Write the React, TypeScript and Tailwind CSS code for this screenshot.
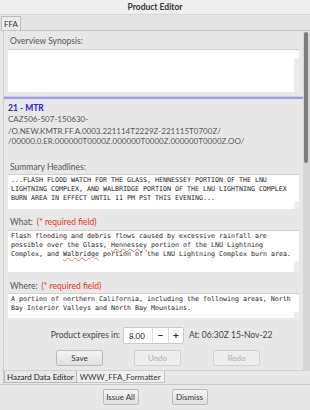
import React from 'react';

const sans = { fontFamily: 'Lato, "DejaVu Sans", sans-serif' };
const mono = { fontFamily: '"DejaVu Sans Mono", "Liberation Mono", monospace' };

function Label({ text, required }: { text: string; required?: boolean }) {
  return (
    <div className="h-[10px] flex items-center pl-[6px] text-[8.5px] leading-[10px] text-[#555]">
      <span>{text}</span>
      {required && <span className="ml-[4px] text-[#e8302a]">(* required field)</span>}
    </div>
  );
}

function TextBox({
  h,
  track,
  children,
}: {
  h: string;
  track: string;
  children?: React.ReactNode;
}) {
  return (
    <div className={`mx-[4px] ${h} bg-white border-t border-[#d0d0d0] flex`}>
      <div
        className="flex-1 pl-[3px] pt-[1px] text-[6.65px] leading-[8.8px] text-[#222] whitespace-pre overflow-hidden"
        style={mono}
      >
        {children}
      </div>
      <div className="w-[5px] flex flex-col justify-end">
        <div className={`${track} bg-[#ececec]`} />
      </div>
    </div>
  );
}

function Btn({ label, disabled }: { label: string; disabled?: boolean }) {
  return (
    <div
      className={`w-[47px] h-[16px] flex items-center justify-center rounded-[2px] border text-[8px] ${
        disabled
          ? 'border-[#d2d2d2] bg-[#ededed] text-[#b0b0b0]'
          : 'border-[#b9b9b9] bg-gradient-to-b from-[#f4f4f4] to-[#e0e0e0] text-[#333]'
      }`}
    >
      {label}
    </div>
  );
}

function Spell({ children }: { children: React.ReactNode }) {
  return (
    <span className="underline decoration-wavy decoration-[#f07070] decoration-[0.5px] underline-offset-[1px]">
      {children}
    </span>
  );
}

export default function App() {
  return (
    <div className="w-[310px] h-[410px] bg-[#e8e8e8] flex flex-col overflow-hidden" style={sans}>
      {/* title bar */}
      <div className="h-[15px] bg-[#efefef] border-b border-[#d6d6d6] flex items-center justify-center text-[8.5px] font-bold text-[#333]">
        Product Editor
      </div>

      {/* top tab strip */}
      <div className="h-[16px] bg-[#e4e4e4] border-b border-[#c4c4c4] flex items-end pl-[1px]">
        <div className="h-[14px] px-[2px] bg-[#eeeeee] border border-b-0 border-[#bcbcbc] flex items-center text-[8px] text-[#333]">
          FFA
        </div>
      </div>

      {/* main panel */}
      <div className="h-[354px] flex pl-[3px] border-b border-[#c8c8c8]">
        <div className="flex-1 flex flex-col border-l border-[#cccccc]">
          <div className="h-[340px] flex flex-col overflow-hidden">
            {/* overview */}
            <div className="h-[66px] pt-[5px] border-b border-[#d2d2d2] flex flex-col">
              <Label text="Overview Synopsis:" />
              <div className="h-[3px]" />
              <TextBox h="h-[43px]" track="h-[34px]" />
            </div>
            <div className="h-[2px] bg-[#9c9cf0]" />

            <div className="mt-[4px] h-[10px] pl-[4px] text-[8.5px] leading-[10px] font-bold text-[#2424c8]">21 - MTR</div>
            <div className="mt-[1px] h-[10px] pl-[4px] text-[8px] leading-[10px] text-[#555]">CAZ506-507-150630-</div>
            <div className="mt-[2px] h-[10px] pl-[4px] text-[8px] leading-[10px] text-[#555]">
              /O.NEW.KMTR.FF.A.0003.221114T2229Z-221115T0700Z/
            </div>
            <div className="h-[10px] pl-[4px] text-[8px] leading-[10px] text-[#555]">
              /00000.0.ER.000000T0000Z.000000T0000Z.000000T0000Z.OO/
            </div>

            <div className="mt-[16px]" />
            <Label text="Summary Headlines:" />
            <div className="h-[2px]" />
            <TextBox h="h-[35px]" track="h-[8px]">
              {'...FLASH FLOOD WATCH FOR THE GLASS, HENNESSEY PORTION OF THE LNU\nLIGHTNING COMPLEX, AND WALBRIDGE PORTION OF THE LNU LIGHTNING COMPLEX\nBURN AREA IN EFFECT UNTIL 11 PM PST THIS EVENING...'}
            </TextBox>

            <div className="mt-[8px]" />
            <Label text="What:" required />
            <div className="h-[3px]" />
            <TextBox h="h-[42px]" track="h-[11px]">
              {'Flash flooding and debris flows caused by excessive rainfall are\npossible over the Glass, '}
              <Spell>Hennessey</Spell>
              {' portion of the LNU Lightning\nComplex, and '}
              <Spell>Walbridge</Spell>
              {' portion of the LNU Lightning Complex burn area.'}
            </TextBox>

            <div className="mt-[9px]" />
            <Label text="Where:" required />
            <div className="h-[2px]" />
            <TextBox h="h-[25px]" track="h-[6px]">
              {'A portion of northern California, including the following areas, North\nBay Interior Valleys and North Bay Mountains.'}
            </TextBox>

            {/* expires row */}
            <div className="mt-[9px] h-[17px] flex items-center">
              <div className="w-[116px] text-right text-[8.5px] text-[#444]">Product expires in:</div>
              <div className="ml-[3px] h-[17px] w-[61px] bg-white border border-[#c8c8c8] rounded-[2px] flex items-center text-[8px] text-[#222]">
                <div className="w-[28px] pl-[5px]">8.00</div>
                <div className="w-[16px] h-full border-l border-[#dcdcdc] flex items-center justify-center text-[10px] font-bold">−</div>
                <div className="flex-1 h-full border-l border-[#dcdcdc] flex items-center justify-center text-[10px] font-bold">+</div>
              </div>
              <div className="ml-[5px] text-[8.5px] text-[#444]">At: 06:30Z 15-Nov-22</div>
            </div>

            {/* save undo redo */}
            <div className="mt-[6px] flex">
              <div className="ml-[52px]"><Btn label="Save" /></div>
              <div className="ml-[31px]"><Btn label="Undo" disabled /></div>
              <div className="ml-[32px]"><Btn label="Redo" disabled /></div>
            </div>
          </div>

          {/* bottom tabs */}
          <div className="h-[14px] flex items-start border-t border-[#d0d0d0]">
            <div className="h-[12px] px-[2px] border border-t-0 border-[#b8b8b8] bg-[#e8e8e8] flex items-center text-[8px] text-[#222]">
              Hazard Data Editor
            </div>
            <div className="h-[12px] px-[3px] border-r border-b border-[#c4c4c4] bg-[#efefef] flex items-center text-[8px] text-[#333]">
              WWW_FFA_Formatter
            </div>
          </div>
        </div>

        {/* scrollbar */}
        <div className="w-[7px] pt-[1px] flex flex-col">
          <div className="h-[339px] bg-[#d6d6d6] pl-[1px] pr-[2px]">
            <div className="h-[131px] w-[4px] rounded-full bg-[#7e7e7e]" />
          </div>
        </div>
      </div>

      {/* bottom button bar */}
      <div className="flex-1 flex items-center justify-center gap-[33px] pb-[2px]">
        <div className="w-[36px] h-[16px] flex items-center justify-center rounded-[2px] border border-[#b9b9b9] bg-gradient-to-b from-[#f4f4f4] to-[#e0e0e0] text-[8px] text-[#333]">
          Issue All
        </div>
        <div className="w-[36px] h-[16px] flex items-center justify-center rounded-[2px] border border-[#b9b9b9] bg-gradient-to-b from-[#f4f4f4] to-[#e0e0e0] text-[8px] text-[#333]">
          Dismiss
        </div>
      </div>
    </div>
  );
}
